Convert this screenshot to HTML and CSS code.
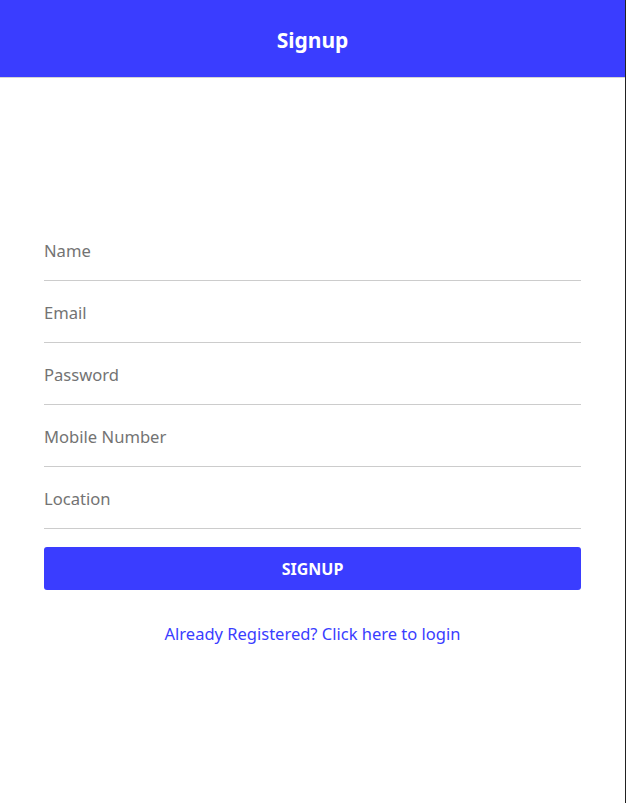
FILE: index.html
```html
<!DOCTYPE html>
<html lang="en">
<head>
<meta charset="utf-8">
<title>Signup</title>
<link rel="stylesheet" href="styles.css">
</head>
<body>
<div class="page">
  <header class="topbar"><h1 class="title">Signup</h1></header>
  <main class="content">
    <form class="form">
      <input class="field" type="text" placeholder="Name">
      <input class="field" type="email" placeholder="Email">
      <input class="field" type="password" placeholder="Password">
      <input class="field" type="tel" placeholder="Mobile Number">
      <input class="field" type="text" placeholder="Location">
      <button class="submit" type="button">SIGNUP</button>
    </form>
    <a class="login-link" href="#">Already Registered? Click here to login</a>
  </main>
</div>
</body>
</html>
```
FILE: styles.css
```css
html, body {
  margin: 0;
  padding: 0;
  background: #ffffff;
}
body {
  font-family: "Noto Sans", "Open Sans", sans-serif;
}
.page {
  width: 625px;
  height: 803px;
  border-right: 1px solid #222222;
  box-sizing: content-box;
}
.topbar {
  height: 77px;
  background: #3a3dff;
  border-bottom: 1px solid #d4d4d4;
  display: flex;
  align-items: center;
  justify-content: center;
}
.title {
  margin: 0;
  color: #ffffff;
  font-size: 21px;
  font-weight: 700;
  padding-top: 2px;
}
.content {
  padding: 141px 44px 0 44px;
  display: flex;
  flex-direction: column;
  align-items: center;
}
.form {
  width: 537px;
  display: flex;
  flex-direction: column;
}
.field {
  height: 62px;
  box-sizing: border-box;
  border: none;
  border-bottom: 1px solid #cccccc;
  padding: 1px 0 0 0;
  font-family: inherit;
  font-size: 16.6px;
  color: #333;
  outline: none;
  background: transparent;
}
.field::placeholder {
  color: #737373;
}
.submit {
  margin-top: 18px;
  height: 43px;
  border: none;
  border-radius: 3px;
  background: #3a3dff;
  color: #ffffff;
  font-family: inherit;
  font-size: 16px;
  font-weight: 700;
}
.login-link {
  margin-top: 32px;
  color: #3a3dff;
  font-size: 16.5px;
  text-decoration: none;
  line-height: 24px;
}
```
